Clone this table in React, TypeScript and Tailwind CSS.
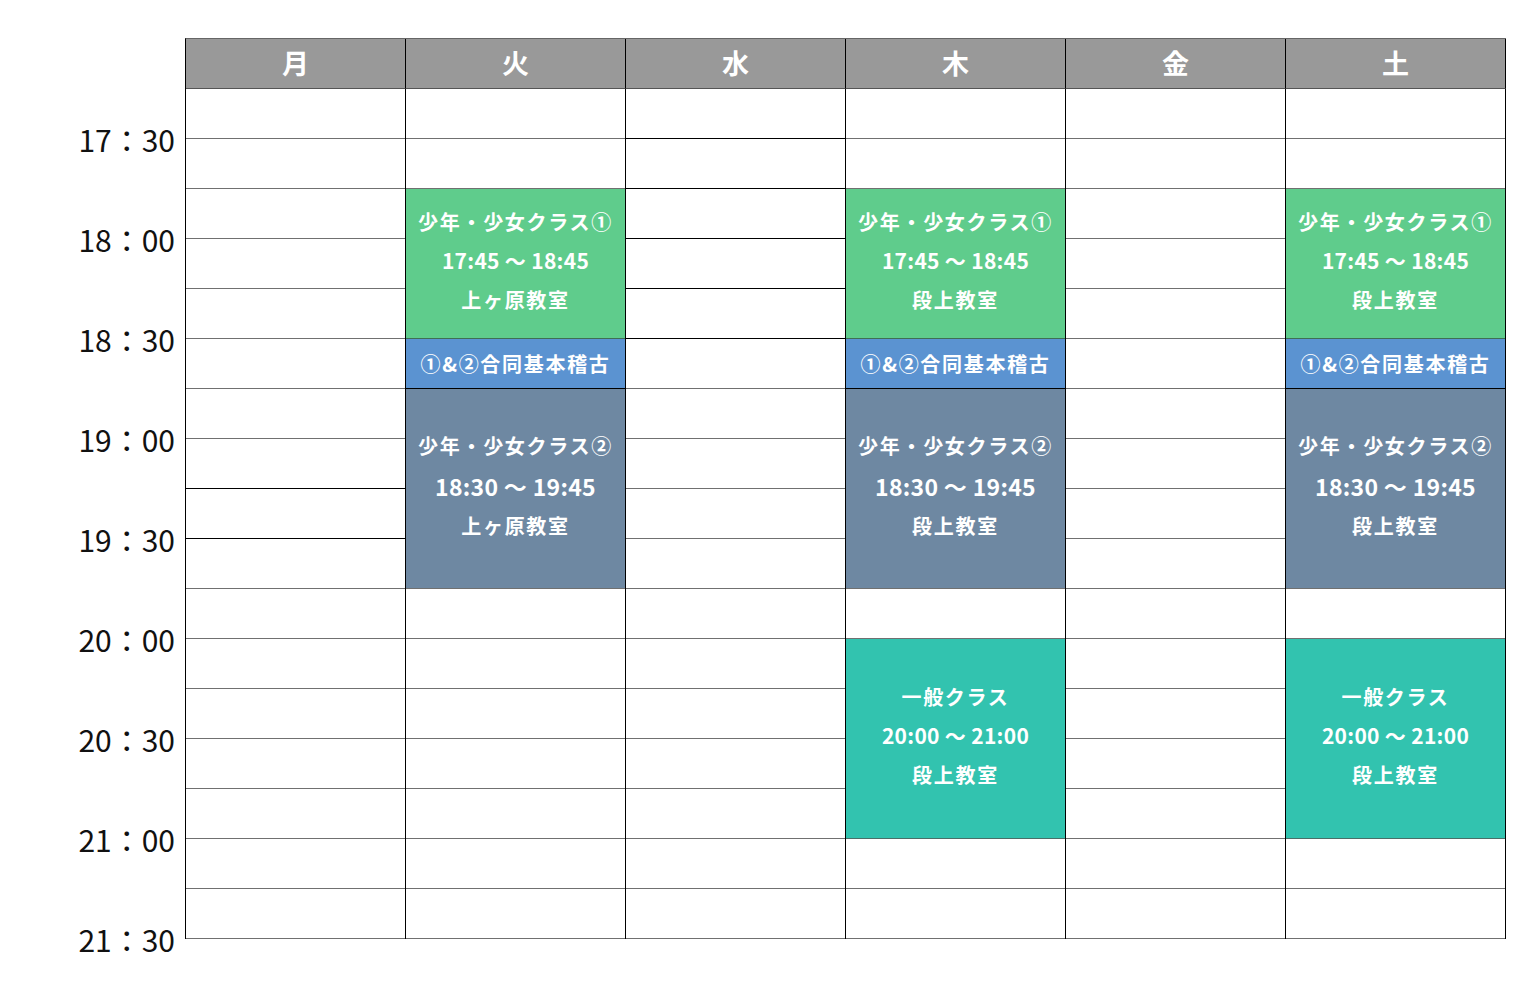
type Block = {
  rows: number
  color?: string
  lines?: string[]
  timeSize?: string
  leading?: string
  border?: string
}

const green = 'bg-[#5fcc8c]'
const blue = 'bg-[#5b93d1]'
const slate = 'bg-[#6e88a2]'
const teal = 'bg-[#32c3af]'

const days = ['月', '火', '水', '木', '金', '土']
const times = ['17：30', '18：00', '18：30', '19：00', '19：30', '20：00', '20：30', '21：00', '21：30']

const empty = (n: number): Block[] => Array.from({ length: n }, () => ({ rows: 1 }))

const kids = (room: string): Block[] => [
  {
    rows: 3,
    color: green,
    lines: ['少年・少女クラス①', '17:45 ～ 18:45', room],
    timeSize: 'text-[21px] tracking-[0.3px]',
    leading: 'leading-[39px]',
    border: 'border-[#3f6f55]',
  },
  { rows: 1, color: blue, lines: ['①&②合同基本稽古'], border: 'border-black' },
  {
    rows: 4,
    color: slate,
    lines: ['少年・少女クラス②', '18:30 ～ 19:45', room],
    timeSize: 'text-[23px] tracking-[0.3px]',
    leading: 'leading-[40px]',
    border: 'border-[#707070]',
  },
]

const general: Block = {
  rows: 4,
  color: teal,
  lines: ['一般クラス', '20:00 ～ 21:00', '段上教室'],
  timeSize: 'text-[21px] tracking-[0.3px]',
  leading: 'leading-[39px]',
  border: 'border-[#4a6f68]',
}

const columns: Block[][] = [
  empty(17),
  [...empty(2), ...kids('上ヶ原教室'), ...empty(7)],
  empty(17),
  [...empty(2), ...kids('段上教室'), ...empty(1), general, ...empty(2)],
  empty(17),
  [...empty(2), ...kids('段上教室'), ...empty(1), general, ...empty(2)],
]

// a few row lines in the original are drawn in black
const blackLines: Record<number, number[]> = {
  0: [7, 8],
  2: [0, 1, 2, 3, 4],
}

const heights: Record<number, string> = {
  1: 'h-[50px]',
  3: 'h-[150px]',
  4: 'h-[200px]',
}

const Column = ({ blocks, index }: { blocks: Block[]; index: number }) => {
  let row = 0
  return (
    <div className="flex flex-col w-[220px] border-r border-black">
      {blocks.map((b, i) => {
        const start = row
        row += b.rows
        const black = (blackLines[index] || []).includes(start)
        if (!b.color) {
          return (
            <div
              key={i}
              className={`${heights[b.rows]} border-b ${black ? 'border-black' : 'border-[#707070]'}`}
            />
          )
        }
        return (
          <div
            key={i}
            className={`${heights[b.rows]} ${b.color} border-b ${b.border} flex flex-col items-center justify-center text-white font-bold ${b.rows > 1 ? 'pb-[6px]' : ''}`}
          >
            {b.lines!.map((l, j) => (
              <span
                key={j}
                className={`${j === 1 ? b.timeSize : 'text-[20px] tracking-[1.7px]'} ${b.leading || 'leading-[24px]'} whitespace-nowrap`}
              >
                {l}
              </span>
            ))}
          </div>
        )
      })}
    </div>
  )
}

export default function App() {
  return (
    <div
      className="w-[1540px] h-[1000px] bg-white pt-[38px] flex"
      style={{ fontFamily: '"Noto Sans CJK JP", "Noto Sans", sans-serif' }}
    >
      {/* Time labels */}
      <div className="w-[185px] flex flex-col">
        <div className="h-[51px]" />
        {times.map((t) => (
          <div
            key={t}
            className="h-[100px] flex items-center justify-end pr-[10px] text-[30px] text-[#111] font-normal"
          >
            {t}
          </div>
        ))}
      </div>

      {/* Table */}
      <div className="flex flex-col">
        <div className="flex border-t border-[#666] border-l border-l-black">
          {days.map((d) => (
            <div
              key={d}
              className="w-[220px] h-[50px] bg-[#999] border-r border-black border-b border-b-[#555] flex items-center justify-center text-white font-bold text-[27px]"
            >
              {d}
            </div>
          ))}
        </div>
        <div className="flex border-l border-black">
          {columns.map((c, i) => (
            <Column key={i} blocks={c} index={i} />
          ))}
        </div>
      </div>
    </div>
  )
}
